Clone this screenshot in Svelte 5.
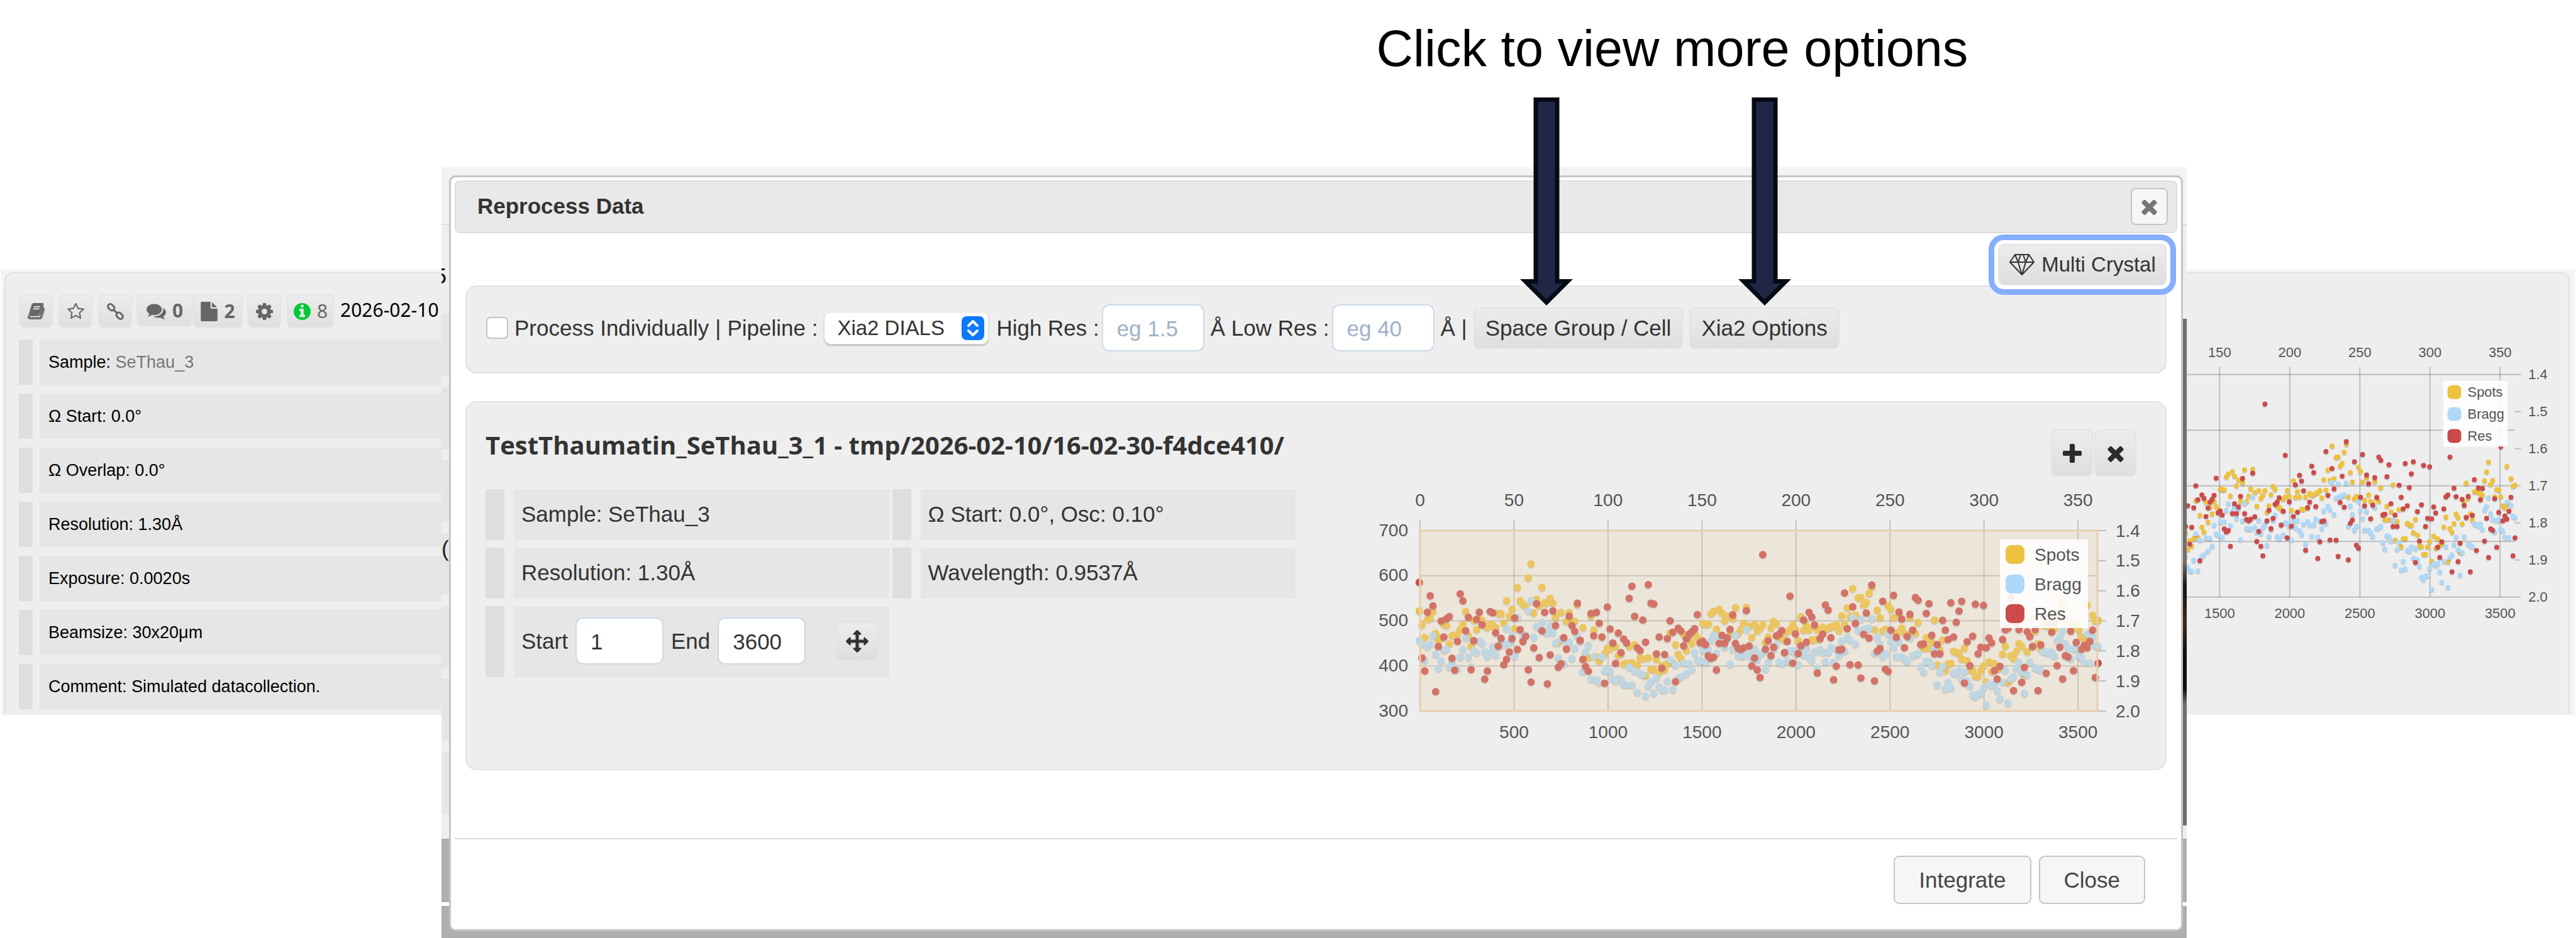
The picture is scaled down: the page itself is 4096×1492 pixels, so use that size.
<script>
  // one reading per sample, measured down from the top of the plot
  const earlyRange = { top: 15, span: 865 };
  const lateRange = { top: 382, span: 760 };

  const readings = {
    spots: {
      early: [
        400, 465, 527, 440, 435, 403, 508, 540, 530, 462, 470, 558, 518, 516, 512, 490, 465, 403, 520, 570,
        445, 490, 435, 445, 470, 480, 465, 468, 480, 412, 414, 458, 352, 425, 392, 485, 288, 352, 368, 378,
        242, 175, 410, 345, 375, 287, 360, 360, 340, 362, 430, 550, 407, 530, 450, 408, 450, 450, 370, 540,
        480, 600, 625, 425, 492, 620, 640, 525, 605, 580, 582, 565, 570, 615, 605, 655, 650, 570, 648, 562,
        660, 625, 630, 710, 625, 680, 680, 632
      ],
      late: [
        980, 950, 968, 942, 813, 938, 863, 903, 920, 818, 886, 835, 858, 815, 833, 845, 773, 775, 776, 732,
        722, 797, 713, 729, 762, 742, 815, 752, 707, 815, 797, 772, 705, 785, 832, 778, 805, 795, 778, 853,
        830, 792, 764, 774, 830, 835, 843, 808, 800, 778, 798, 846, 745, 802, 782, 800, 842, 842, 800, 838,
        788, 795, 793, 787, 785, 778, 803, 741, 777, 708, 743, 626, 738, 665, 664, 695, 685, 647, 620, 800,
        717, 749, 806, 798, 698, 713, 749, 812, 735, 793, 815, 820, 748, 800, 815, 769, 860, 878, 832, 878,
        851, 759, 948, 884, 843, 971, 943, 942, 890, 895, 898, 922, 877, 930, 969, 970, 996, 996, 971, 952,
        1020, 934, 975, 943, 965, 960, 903, 869, 1022, 908, 921, 891, 858, 870, 990, 892, 820, 753, 805, 858,
        880, 782, 780, 785, 790, 795, 745, 715, 681, 757, 744, 800, 775, 776, 799, 830, 838, 696, 825, 738,
        763, 760
      ]
    },
    bragg: {
      early: [
        540, 560, 635, 570, 560, 519, 608, 676, 638, 588, 583, 668, 640, 670, 678, 622, 584, 530, 622, 668,
        590, 600, 545, 555, 595, 618, 600, 572, 612, 570, 545, 562, 484, 553, 515, 617, 432, 490, 525, 515,
        400, 352, 526, 475, 480, 455, 500, 505, 470, 505, 555, 625, 535, 655, 560, 550, 628, 580, 520, 545,
        690, 598, 565, 728, 618, 732, 743, 621, 688, 680, 690, 728, 735, 725, 730, 752, 755, 670, 755, 688,
        790, 700, 705, 808, 760, 740, 795, 722
      ],
      late: [
        1040, 1052, 1054, 1016, 926, 1052, 947, 1003, 998, 940, 985, 942, 968, 896, 926, 930, 885, 937, 885, 846,
        823, 898, 850, 835, 873, 840, 945, 882, 822, 908, 908, 910, 800, 903, 920, 880, 925, 905, 895, 966,
        936, 910, 880, 862, 936, 942, 895, 930, 888, 890, 900, 947, 885, 905, 880, 915, 928, 893, 962, 884,
        895, 934, 895, 875, 937, 882, 908, 848, 890, 832, 843, 749, 860, 804, 755, 798, 796, 793, 753, 900,
        831, 860, 913, 900, 815, 846, 874, 913, 850, 914, 922, 935, 835, 908, 905, 900, 956, 978, 933, 935,
        950, 880, 1033, 979, 955, 1050, 1020, 1046, 982, 985, 971, 1010, 977, 1015, 1037, 1074, 1082, 1070, 1068, 1044,
        1116, 1028, 1034, 1028, 1056, 1091, 1020, 970, 1109, 1007, 998, 963, 938, 980, 1067, 990, 936, 870, 960, 966,
        970, 892, 893, 900, 893, 911, 845, 833, 803, 857, 877, 920, 880, 878, 910, 917, 938, 818, 939, 829,
        865, 870
      ]
    },
    res: {
      early: [
        263, 625, 688, 406, 328, 376, 787, 570, 448, 525, 437, 427, 627, 684, 546, 319, 352, 495, 431, 681,
        543, 441, 406, 466, 727, 688, 403, 409, 505, 568, 531, 658, 632, 597, 533, 434, 585, 490, 547, 522,
        682, 741, 577, 365, 624, 495, 407, 750, 611, 400, 470, 670, 653, 528, 583, 425, 470, 497, 363, 541,
        633, 667, 689, 412, 519, 407, 459, 524, 747, 381, 487, 554, 652, 506, 600, 535, 553, 340, 282, 426,
        577, 590, 444, 550, 274, 363, 367, 606
      ],
      late: [
        830, 961, 904, 837, 762, 810, 1018, 793, 805, 867, 838, 818, 808, 795, 736, 855, 848, 862, 909, 920,
        915, 969, 857, 823, 857, 834, 798, 737, 857, 877, 882, 876, 719, 868, 952, 918, 969, 1001, 483, 882,
        846, 908, 873, 825, 818, 803, 896, 849, 658, 940, 817, 900, 867, 759, 852, 726, 746, 779, 982, 836,
        818, 695, 717, 833, 1010, 953, 884, 882, 645, 795, 947, 703, 773, 948, 1003, 819, 729, 835, 611, 1015,
        890, 879, 680, 965, 975, 801, 655, 831, 725, 755, 875, 828, 734, 802, 664, 675, 862, 859, 731, 690,
        823, 901, 862, 901, 760, 801, 841, 686, 830, 768, 721, 680, 1024, 850, 951, 827, 692, 901, 873, 697,
        875, 834, 855, 972, 1007, 953, 841, 800, 793, 664, 1056, 770, 799, 1021, 958, 808, 829, 870, 798, 1056,
        863, 741, 983, 769, 810, 771, 951, 873, 1007, 909, 914, 806, 972, 853, 629, 882, 865, 876, 849, 801,
        1001, 940
      ]
    }
  };

  function depths({ early, late }) {
    return [
      ...early.map(y => (y - earlyRange.top) / earlyRange.span),
      ...late.map(y => (y - lateRange.top) / lateRange.span)
    ];
  }

  const series = [
    { name: 'Spots', color: '#edc240', data: depths(readings.spots) },
    { name: 'Bragg', color: '#afd8f8', data: depths(readings.bragg) },
    { name: 'Res', color: '#cb4b4b', data: depths(readings.res) }
  ];

  const frame = i => i * 1.45 - 0.4;
  const counts = [700, 600, 500, 400, 300];
  const resolutions = ['1.4', '1.5', '1.6', '1.7', '1.8', '1.9', '2.0'];

  const mainPlot = {
    width: 1240, height: 411, x0: 95, step: 2.989, top: 66, bottom: 353, gridTop: 50,
    right: 1172, tickEnd: 1186, first: 0, labelX: 1201, upper: 17, lower: 386,
    font: 28, dot: 6, counts: true, selected: true,
    legend: { x: 1017, y: 80, w: 140, h: 141, box: 30, pad: 9, pitch: 47, text: 55 }
  };

  const sidePlot = {
    width: 609, height: 590, x0: -283, step: 2.237, top: 54, bottom: 409, gridTop: 42,
    right: 523, tickEnd: 533, first: 150, labelX: 545, upper: 19, lower: 435,
    font: 22, dot: 4, counts: false, selected: false,
    legend: { x: 409, y: 64, w: 103, h: 105, box: 22, pad: 7, pitch: 35, text: 39 }
  };

  const details = [
    ['Ω Start:', '0.0°'],
    ['Ω Overlap:', '0.0°'],
    ['Resolution:', '1.30Å'],
    ['Exposure:', '0.0020s'],
    ['Beamsize:', '30x20μm'],
    ['Comment:', 'Simulated datacollection.']
  ];

  const times = 'M1490 1322q0 40-28 68l-136 136q-28 28-68 28t-68-28l-294-294-294 294q-28 28-68 28t-68-28l-136-136q-28-28-28-68t28-68l294-294-294-294q-28-28-28-68t28-68l136-136q28-28 68-28t68 28l294 294 294-294q28-28 68-28t68 28l136 136q28 28 28 68t-28 68l-294 294 294 294q28 28 28 68z';

  let individually = false;
  let pipeline = 'Xia2 DIALS';
  let highRes = '';
  let lowRes = '';
  let start = 1;
  let end = 3600;

  $: marks = p => [0, 50, 100, 150, 200, 250, 300, 350].filter(f => f >= p.first);
  $: depthY = (p, d) => p.top + d * (p.bottom - p.top);
</script>

{#snippet plot(p)}
  <svg class="plot" viewBox="0 0 {p.width} {p.height}" font-size={p.font} role="img" aria-label="Spots, Bragg and Res by image">
    <g stroke="#000" stroke-opacity="0.2" stroke-width="2">
      {#each marks(p) as f}
        <line x1={p.x0 + f * p.step} x2={p.x0 + f * p.step} y1={p.gridTop} y2={p.bottom} />
      {/each}
      {#each counts as c, i}
        <line x1={Math.max(0, p.x0)} x2={i % 4 ? p.right : p.tickEnd} y1={depthY(p, i / 4)} y2={depthY(p, i / 4)} />
      {/each}
      {#each resolutions.slice(1, -1) as r, i}
        <line x1={p.right} x2={p.tickEnd} y1={depthY(p, (i + 1) / 6)} y2={depthY(p, (i + 1) / 6)} />
      {/each}
    </g>

    {#each series as s}
      <g fill="#000" fill-opacity="0.14">
        {#each s.data as d, i}
          <circle cx={p.x0 + frame(i) * p.step} cy={depthY(p, d) + 2} r={p.dot} />
        {/each}
      </g>
      <g fill={s.color}>
        {#each s.data as d, i}
          <circle cx={p.x0 + frame(i) * p.step} cy={depthY(p, d)} r={p.dot} />
        {/each}
      </g>
    {/each}

    {#if p.selected}
      <rect x={p.x0} y={p.top} width={p.right - p.x0} height={p.bottom - p.top}
            fill="#e8cfac" fill-opacity="0.3" stroke="#e8cfac" stroke-width="3" />
    {/if}

    <g fill="#545454">
      {#each marks(p) as f}
        <text x={p.x0 + f * p.step} y={p.upper} text-anchor="middle" dominant-baseline="central">{f}</text>
        {#if f > 0}
          <text x={p.x0 + f * p.step} y={p.lower} text-anchor="middle" dominant-baseline="central">{f * 10}</text>
        {/if}
      {/each}
      {#if p.counts}
        {#each counts as c, i}
          <text x={p.x0 - 19} y={depthY(p, i / 4) - 1} text-anchor="end" dominant-baseline="central">{c}</text>
        {/each}
      {/if}
      {#each resolutions as r, i}
        <text x={p.labelX} y={depthY(p, i / 6)} dominant-baseline="central">{r}</text>
      {/each}
    </g>

    <rect x={p.legend.x} y={p.legend.y} width={p.legend.w} height={p.legend.h} fill="#fff" fill-opacity="0.88" />
    {#each series as s, i}
      <rect x={p.legend.x + p.legend.pad} y={p.legend.y + p.legend.pad + i * p.legend.pitch}
            width={p.legend.box} height={p.legend.box} rx={p.legend.pad} fill={s.color} />
      <text x={p.legend.x + p.legend.text} y={p.legend.y + p.legend.pad + p.legend.box / 2 + i * p.legend.pitch}
            fill="#545454" dominant-baseline="central">{s.name}</text>
    {/each}
  </svg>
{/snippet}

{#snippet arrow()}
  <svg class="arrow" viewBox="0 0 84 331" aria-hidden="true">
    <path d="M25 3.500H59V292.500H78L42 323 6 292.500H25Z" fill="#1f2744" stroke="none" />
    <path d="M21.500 0H62.500V289H84L42 331 0 289H21.500ZM28.500 7V296H16.500L42 321.500 67.500 296H55.500V7Z" fill="#050a14" fill-rule="evenodd" />
  </svg>
{/snippet}

<div class="page">
  <header>
    <h1>Click to view more options</h1>
  </header>

  <main>
    <section class="side left">
      <div class="collection">
        <div class="tools">
          <button class="chip" aria-label="Logbook">
            <svg viewBox="0 0 30 28">
              <path d="M9 0H26Q28 0 27 3L22 19Q21 21 19 21H5Q3 21 3 23T5 25H20Q22 25 23 23L28 6" fill="none" stroke="#666" stroke-width="2" />
              <path d="M9 0H25Q27 0 26 3L21 18Q20 20 18 20H4Q2 20 1 22L7 2Q7 0 9 0Z" fill="#666" />
              <path d="M11 5.500H22M9.500 9.500H20.500" stroke="#eee" stroke-width="2" />
              <path d="M1 21Q0 27 5 27H21Q24 27 25 24L30 8" fill="none" stroke="#666" stroke-width="2" />
            </svg>
          </button>
          <button class="chip" aria-label="Favourite">
            <svg viewBox="64 64 1664 1664"><path d="M1201 1004l306-297-422-62-189-382-189 382-422 62 306 297-73 421 378-199 377 199zm527-357q0 22-26 48l-363 354 86 500q1 7 1 20 0 50-41 50-19 0-40-12l-449-236-449 236q-22 12-40 12-21 0-31.500-14.500t-10.500-35.500q0-6 2-20l86-500-364-354q-25-27-25-48 0-37 56-46l502-73 225-455q19-41 49-41t49 41l225 455 502 73q56 9 56 46z" /></svg>
          </button>
          <button class="chip" aria-label="Permalink">
            <svg class="link" viewBox="0 0 28 28">
              <rect x="-6" y="-4" width="12" height="8" rx="4" transform="translate(7 7) rotate(45)" />
              <rect x="-6" y="-4" width="12" height="8" rx="4" transform="translate(21 21) rotate(45)" />
              <path d="M10 10L18 18" />
            </svg>
          </button>
          <button class="chip comments">
            <svg class="wide" viewBox="0 128 1792 1536"><path d="M1408 768q0 139-94 257t-256.500 186.500-353.500 68.500q-86 0-176-16-124 88-278 128-36 9-86 16h-3q-11 0-20.500-8t-11.500-21q-1-3-1-6.500t.5-6.500 2-6l2.500-5 3.500-5.500 4-5 4.500-5 4-4.500q5-6 23-25t26-29.500 22.500-29 25-38.500 20.500-44q-124-72-195-177t-71-224q0-139 94-257t256.500-186.500 353.500-68.500 353.500 68.500 256.500 186.500 94 257zm384 256q0 120-71 224.500t-195 176.500q10 24 20.500 44t25 38.500 22.500 29 26 29.500 23 25q1 1 4 4.500t4.500 5 4 5 3.500 5.500l2.500 5 2 6 .5 6.500-1 6.500q-3 14-13 22t-22 7q-50-7-86-16-154-40-278-128-90 16-176 16-271 0-472-132 58 4 88 4 161 0 309-45t264-129q125-92 192-212t67-254q0-77-23-152 129 71 204 178t75 230z" /></svg>
            <b>0</b>
          </button>
          <button class="chip files">
            <svg viewBox="128 0 1536 1792"><path d="M1152 512v-472q22 14 36 28l408 408q14 14 28 36h-472zm-128 32q0 40 28 68t68 28h544v1056q0 40-28 68t-68 28h-1344q-40 0-68-28t-28-68v-1600q0-40 28-68t68-28h800v544z" /></svg>
            <b>2</b>
          </button>
          <button class="chip" aria-label="Settings">
            <svg viewBox="128 128 1536 1536"><path d="M1152 896q0-106-75-181t-181-75-181 75-75 181 75 181 181 75 181-75 75-181zm512-109v222q0 12-8 23t-20 13l-185 28q-19 54-39 91 35 50 107 138 10 12 10 25t-9 23q-27 37-99 108t-94 71q-12 0-26-9l-138-108q-44 23-91 38-16 136-29 186-7 28-36 28h-222q-14 0-24.500-8.500t-11.500-21.500l-28-184q-49-16-90-37l-141 107q-10 9-25 9-14 0-25-11-126-114-165-168-7-10-7-23 0-12 8-23 15-21 51-66.500t54-70.500q-27-50-41-99l-183-27q-13-2-21-12.500t-8-23.500v-222q0-12 8-23t19-13l186-28q14-46 39-92-40-57-107-138-10-12-10-24 0-10 9-23 26-36 98.500-107.500t94.500-71.500q13 0 26 10l138 107q44-23 91-38 16-136 29-186 7-28 36-28h222q14 0 24.500 8.500t11.500 21.500l28 184q49 16 90 37l142-107q9-9 24-9 13 0 25 10 129 119 165 170 7 8 7 22 0 12-8 23-15 21-51 66.500t-54 70.500q26 50 41 98l183 28q13 2 21 12.500t8 23.500z" /></svg>
          </button>
          <button class="chip status">
            <svg viewBox="128 128 1536 1536"><path fill="#00c936" d="M1152 1376v-160q0-14-9-23t-23-9h-96v-512q0-14-9-23t-23-9h-320q-14 0-23 9t-9 23v160q0 14 9 23t23 9h96v320h-96q-14 0-23 9t-9 23v160q0 14 9 23t23 9h448q14 0 23-9t9-23zm-128-896v-160q0-14-9-23t-23-9h-192q-14 0-23 9t-9 23v160q0 14 9 23t23 9h192q14 0 23-9t9-23zm640 416q0 209-103 385.500t-279.500 279.500-385.500 103-385.500-103-279.500-279.500-103-385.500 103-385.500 279.500-279.500 385.500-103 385.500 103 279.500 279.500 103 385.500z" /></svg>
            <span>8</span>
          </button>
          <span class="date">2026-02-10</span>
        </div>
        <ul class="facts">
          <li><span>Sample: <a href="#sample">SeThau_3</a></span></li>
          {#each details as [name, value]}
            <li><span>{name} {value}</span></li>
          {/each}
        </ul>
      </div>
    </section>

    <section class="backdrop">
      <div class="slice">
        <span class="behind">5</span>
        {#each [0, 1, 2, 3, 4, 5, 6] as n}
          <i>{n === 3 ? '(' : ''}</i>
        {/each}
      </div>

      <div class="dialog" role="dialog" aria-labelledby="dialog-title">
        <div class="titlebar">
          <h2 id="dialog-title">Reprocess Data</h2>
          <button class="dismiss" aria-label="Dismiss">
            <svg viewBox="302 238 1188 1316"><path d={times} fill="#777" /></svg>
          </button>
        </div>

        <div class="body">
          <button class="action multi">
            <svg viewBox="0 0 42 36" fill="none" stroke="#333" stroke-width="2" stroke-linejoin="round">
              <path d="M10 2H32L40 14 21 34 2 14ZM2 14H40M15 14L21 34 27 14M10 2L15 14 19 2M23 2L27 14 32 2" />
            </svg>
            Multi Crystal
          </button>

          <div class="panel toolbar">
            <input id="individually" type="checkbox" bind:checked={individually} />
            <label for="individually">Process Individually</label>
            <span>|</span>
            <label for="pipeline">Pipeline :</label>
            <span class="picker">
              <select id="pipeline" bind:value={pipeline}>
                <option>Xia2 DIALS</option>
                <option>Xia2 3dii</option>
              </select>
              <svg viewBox="0 0 36 38" aria-hidden="true">
                <rect width="36" height="38" rx="8" fill="#0a7aff" />
                <path d="M11 15L18 8 25 15M11 23L18 30 25 23" fill="none" stroke="#fff" stroke-width="4" stroke-linecap="round" stroke-linejoin="round" />
              </svg>
            </span>
            <label class="field">High Res : <input type="text" placeholder="eg 1.5" bind:value={highRes} /></label>
            <label class="field">Å Low Res : <input type="text" placeholder="eg 40" bind:value={lowRes} /></label>
            <span>Å |</span>
            <div class="pointed cell">
              <button class="action">Space Group / Cell</button>
              {@render arrow()}
            </div>
            <div class="pointed">
              <button class="action">Xia2 Options</button>
              {@render arrow()}
            </div>
          </div>

          <div class="panel run">
            <div class="summary">
              <h3>TestThaumatin_SeThau_3_1 - tmp/2026-02-10/16-02-30-f4dce410/</h3>
              <ul class="params">
                <li><span>Sample: SeThau_3</span></li>
                <li><span>Ω Start: 0.0°, Osc: 0.10°</span></li>
                <li><span>Resolution: 1.30Å</span></li>
                <li><span>Wavelength: 0.9537Å</span></li>
                <li class="range">
                  <span>
                    <label>Start <input type="text" bind:value={start} /></label>
                    <label>End <input type="text" bind:value={end} /></label>
                    <button class="action move" aria-label="Select range">
                      <svg viewBox="0 0 1792 1792"><path d="M1792 896q0 26-19 45l-256 256q-19 19-45 19t-45-19-19-45v-128h-384v384h128q26 0 45 19t19 45-19 45l-256 256q-19 19-45 19t-45-19l-256-256q-19-19-19-45t19-45 45-19h128v-384h-384v128q0 26-19 45t-45 19-45-19l-256-256q-19-19-19-45t19-45l256-256q19-19 45-19t45 19 19 45v128h384v-384h-128q-26 0-45-19t-19-45 19-45l256-256q19-19 45-19t45 19l256 256q19 19 19 45t-19 45-45 19h-128v384h384v-128q0-26 19-45t45-19 45 19l256 256q19 19 19 45z" /></svg>
                    </button>
                  </span>
                </li>
              </ul>
            </div>
            <div class="chart">
              <div class="row-tools">
                <button class="action square" aria-label="Add">
                  <svg viewBox="192 128 1408 1408"><path d="M1600 736v192q0 40-28 68t-68 28h-416v416q0 40-28 68t-68 28h-192q-40 0-68-28t-28-68v-416h-416q-40 0-68-28t-28-68v-192q0-40 28-68t68-28h416v-416q0-40 28-68t68-28h192q40 0 68 28t28 68v416h416q40 0 68 28t28 68z" /></svg>
                </button>
                <button class="action square" aria-label="Remove">
                  <svg viewBox="202 188 1388 1416"><path d={times} /></svg>
                </button>
              </div>
              {@render plot(mainPlot)}
            </div>
          </div>
        </div>

        <footer>
          <button>Integrate</button>
          <button>Close</button>
        </footer>
      </div>

      <div class="edge"></div>
    </section>

    <section class="side right">
      <div class="collection">
        {@render plot(sidePlot)}
      </div>
    </section>
  </main>
</div>

<style>
  :global(body) {
    background: #fff;
  }

  * {
    box-sizing: border-box;
  }

  h1, h2, h3, ul {
    margin: 0;
    padding: 0;
  }

  button, input, select {
    margin: 0;
    font: inherit;
    color: inherit;
  }

  svg {
    display: block;
    flex: none;
  }

  .page {
    display: flex;
    flex-direction: column;
    min-height: 100vh;
    font-family: "Liberation Sans", Arial, Helvetica, sans-serif;
    font-size: 35px;
    line-height: 40px;
    color: #333;
  }

  header {
    display: grid;
    grid-template-columns: 8fr 7fr;
    height: 266px;
    padding-top: 32px;
  }

  h1 {
    grid-column: 2;
    padding-left: 4px;
    font-size: 81px;
    font-weight: 400;
    line-height: 90px;
    color: #000;
    white-space: nowrap;
  }

  main {
    flex: 1;
    display: grid;
    grid-template-columns: 702fr 2775fr 619fr;
  }

  /* panels either side of the dialog */
  .side {
    align-self: start;
    margin-top: 163px;
    height: 708px;
    min-width: 0;
    padding-top: 4px;
    background: #f3f3f3;
    overflow: hidden;
    color: #000;
    font-size: 27px;
    line-height: 32px;
  }

  .left {
    padding-left: 5px;
    margin-left: 2px;
  }

  .right {
    padding-right: 8px;
    margin-right: 2px;
  }

  .collection {
    height: 100%;
    background: #eee;
    border-top: 2px solid #e0e0e0;
  }

  .left .collection {
    padding: 33px 0 0 21px;
    border-left: 2px solid #e0e0e0;
    border-top-left-radius: 14px;
  }

  .right .collection {
    padding-top: 107px;
    border-right: 2px solid #e0e0e0;
    border-top-right-radius: 14px;
  }

  .tools {
    display: flex;
    align-items: flex-start;
    gap: 9px;
    height: 72px;
    font-family: "Noto Sans", "Open Sans", sans-serif;
    font-size: 30px;
    color: #666;
  }

  .chip {
    display: flex;
    align-items: center;
    justify-content: center;
    gap: 10px;
    height: 54px;
    min-width: 54px;
    padding: 0 10px;
    border: 2px solid #e5e5e5;
    border-radius: 8px;
    background: linear-gradient(#ececec, #dfdfdf);
  }

  .chip svg {
    width: 27px;
    height: 27px;
    fill: #666;
  }

  .chip .link {
    fill: none;
    stroke: #666;
    stroke-width: 3px;
    overflow: visible;
  }

  .chip .wide {
    width: 31px;
  }

  .comments {
    height: 52px;
    width: 90px;
    margin-left: -2px;
    margin-right: -9px;
  }

  .files {
    width: 79px;
    margin-right: -2px;
  }

  .files svg {
    height: 31px;
  }

  .status {
    width: 76px;
  }

  .date {
    line-height: 50px;
    color: #000;
    white-space: nowrap;
  }

  .facts {
    display: flex;
    flex-direction: column;
    gap: 14px;
    list-style: none;
  }

  .facts li {
    display: flex;
    gap: 11px;
    height: 72px;
  }

  .facts li::before {
    content: "";
    flex: 0 0 22px;
    background: #dedede;
  }

  .facts span {
    flex: 1;
    padding: 20px 14px;
    background: #e6e6e6;
    white-space: nowrap;
  }

  .facts a {
    color: #777;
    text-decoration: none;
  }

  /* page showing round the dialog */
  .backdrop {
    display: grid;
    grid-template-columns: 12px minmax(0, 1fr) 6px;
    background: linear-gradient(#f3f3f3 90px, #ddd 90px 92px, #eee 92px 1068px, #aeaeae 1068px 1169px, #fff 1169px 1175px, #aeaeae 1175px);
  }

  .slice {
    overflow: hidden;
    color: #222;
  }

  .slice i {
    display: block;
    height: 98px;
    margin-bottom: 18px;
    background: #e5e5e5;
    font-style: normal;
    line-height: 50px;
  }

  .behind {
    display: flex;
    justify-content: flex-end;
    height: 234px;
    width: 8px;
    padding-top: 153px;
    color: #000;
  }

  .edge {
    margin: 241px 0 0;
    height: 806px;
    background: linear-gradient(#736e66 48%, #15130f 53%, #3d2d1c 60%, #100e0b 66% 73%, #736e66 76%);
  }

  .dialog {
    display: flex;
    flex-direction: column;
    margin: 13px 0 11px;
    padding: 5px 6px 40px;
    border: 3px solid #c5c5c5;
    border-radius: 10px;
    background: #fff;
  }

  .titlebar {
    display: flex;
    justify-content: space-between;
    align-items: center;
    height: 84px;
    padding: 0 13px 2px 34px;
    border: 2px solid #ddd;
    border-radius: 8px;
    background: #e9e9e9;
  }

  h2 {
    font-size: 35px;
    line-height: 40px;
  }

  .dismiss {
    display: grid;
    place-items: center;
    width: 59px;
    height: 59px;
    border: 2px solid #c5c5c5;
    border-radius: 8px;
    background: #f6f6f6;
  }

  .dismiss svg {
    width: 27px;
    height: 27px;
  }

  .body {
    flex: 1;
    display: flex;
    flex-direction: column;
    padding: 17px 17px 0;
  }

  .action {
    display: flex;
    align-items: center;
    justify-content: center;
    height: 66px;
    padding: 0 17px;
    border: 2px solid #e3e3e3;
    border-radius: 9px;
    background: linear-gradient(#ececec, #dedede);
    white-space: nowrap;
  }

  .multi {
    position: relative;
    align-self: flex-end;
    gap: 10px;
    width: 268px;
    font-size: 33px;
    box-shadow: 0 0 0 6px #fff;
    outline: 9px solid #86aeff;
    outline-offset: 6px;
  }

  .multi svg {
    width: 42px;
    height: 36px;
  }

  .panel {
    border: 2px solid #e1e1e1;
    border-radius: 18px;
    background: #eee;
  }

  .toolbar {
    display: flex;
    align-items: center;
    gap: 10px;
    height: 140px;
    padding: 0 31px 5px;
    white-space: nowrap;
  }

  .toolbar input[type="checkbox"] {
    appearance: none;
    width: 35px;
    height: 35px;
    border: 2px solid #c4c4c4;
    border-radius: 7px;
    background: #fff;
  }

  .picker {
    position: relative;
    margin-right: 2px;
  }

  select {
    appearance: none;
    display: block;
    width: 262px;
    height: 52px;
    padding: 0 60px 0 20px;
    border: 1px solid #ddd;
    border-radius: 11px;
    background: #fff;
    box-shadow: 0 2px 2px #bbb;
    font-size: 33px;
  }

  .picker svg {
    position: absolute;
    top: 7px;
    right: 7px;
    width: 36px;
    height: 38px;
    pointer-events: none;
  }

  .field {
    display: flex;
    align-items: center;
    gap: 4px;
  }

  input[type="text"] {
    height: 75px;
    padding: 2px 22px 0;
    border: 2px solid #ccd9e8;
    border-radius: 12px;
    background: #fff;
  }

  .field input {
    width: 163px;
  }

  ::placeholder {
    color: #9fb1c9;
    opacity: 1;
  }

  .pointed {
    position: relative;
  }

  .arrow {
    position: absolute;
    bottom: calc(100% + 3px);
    left: calc(50% - 42px);
    width: 84px;
    height: 331px;
    pointer-events: none;
  }

  .cell .arrow {
    left: calc(35% - 42px);
  }

  .run {
    display: grid;
    grid-template-columns: minmax(0, 1288fr) minmax(0, 1240fr);
    gap: 103px;
    margin-top: 44px;
    padding: 43px 40px 34px 30px;
  }

  h3 {
    height: 95px;
    font-family: "Open Sans", "Noto Sans", sans-serif;
    font-size: 40px;
    font-weight: 700;
    line-height: 50px;
    white-space: nowrap;
  }

  .params {
    display: grid;
    grid-template-columns: 1fr 1fr;
    gap: 12px 5px;
    list-style: none;
  }

  .params li {
    display: flex;
    gap: 15px;
    min-height: 81px;
  }

  .params li::before {
    content: "";
    flex: 0 0 30px;
    background: #dedede;
  }

  .params li > span {
    flex: 1;
    padding: 20px 12px;
    background: #e6e6e6;
    white-space: nowrap;
  }

  .params .range > span {
    display: flex;
    align-items: center;
    gap: 12px;
    height: 113px;
    padding: 0 17px 2px 12px;
  }

  .range label {
    display: flex;
    align-items: center;
    gap: 12px;
  }

  .range input {
    width: 140px;
  }

  .move {
    width: 68px;
    height: 62px;
    margin-left: auto;
  }

  .move svg {
    width: 36px;
    height: 36px;
    fill: #333;
  }

  .row-tools {
    display: flex;
    justify-content: flex-end;
    gap: 2px;
    height: 95px;
    padding-right: 6px;
  }

  .square {
    width: 67px;
    height: 75px;
    padding: 0;
  }

  .square svg {
    width: 30px;
    height: 30px;
    fill: #2b2b2b;
  }

  .plot {
    width: 100%;
    height: auto;
    overflow: hidden;
  }

  footer {
    display: flex;
    justify-content: flex-end;
    gap: 12px;
    padding: 26px 51px 0;
    border-top: 2px solid #ddd;
  }

  footer button {
    height: 77px;
    padding: 0 38px;
    border: 2px solid #c5c5c5;
    border-radius: 9px;
    background: #f6f6f6;
    color: #454545;
  }
</style>
